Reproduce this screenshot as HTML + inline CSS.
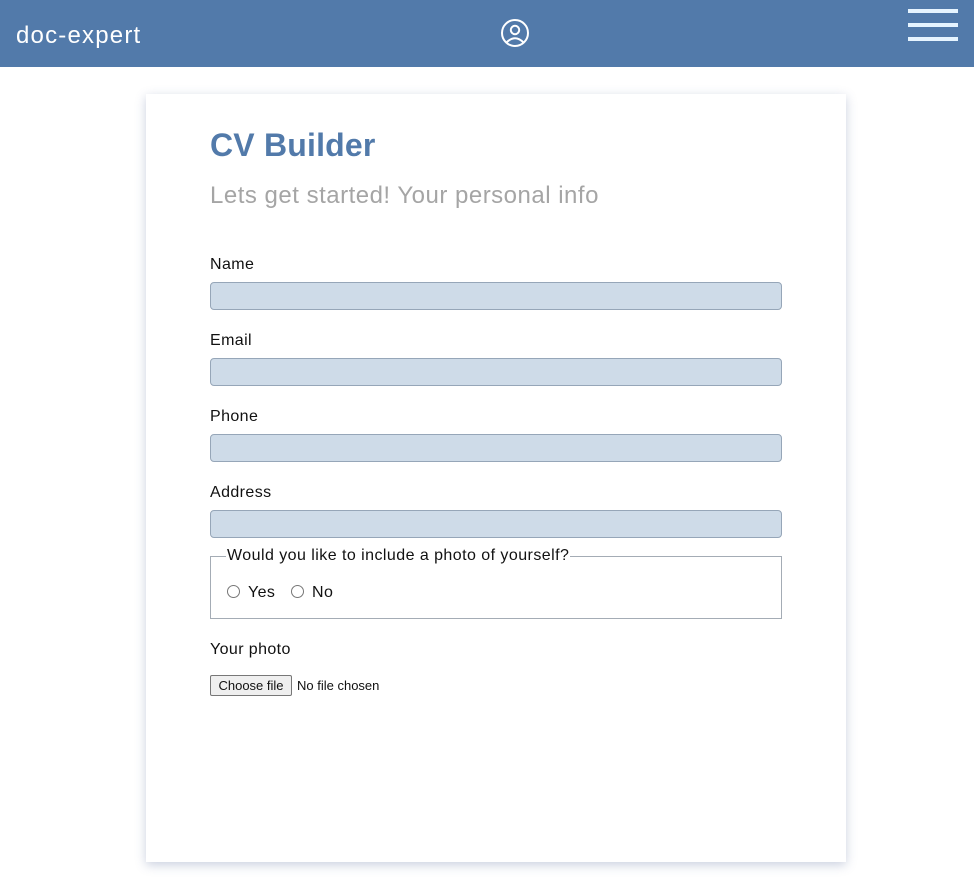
<!DOCTYPE html>
<html><head><meta charset="utf-8"><style>
*{box-sizing:border-box;margin:0;padding:0}
body{width:974px;height:882px;background:#fff;font-family:"Liberation Sans",sans-serif;position:relative;overflow:hidden}
.hdr{position:absolute;left:0;top:0;width:974px;height:67px;background:#527aaa}
.logo{position:absolute;left:16px;top:22px;color:#fff;font-size:24px;letter-spacing:1.2px}
.bar{position:absolute;left:908px;width:50px;height:4px;background:#e6f4ff}
.card{position:absolute;left:146px;top:94px;width:700px;height:768px;background:#fff;box-shadow:0 3px 10px rgba(80,100,150,0.3)}
.t{position:absolute;left:210px;top:127px;font-size:32px;font-weight:bold;color:#527aaa;letter-spacing:0.2px}
.s{position:absolute;left:210px;top:182px;font-size:24px;color:#a5a5a5;font-weight:300;letter-spacing:0.5px}
.l{position:absolute;left:210px;font-size:16px;color:#111;letter-spacing:0.4px}
.in{position:absolute;left:210px;width:572px;height:28px;background:#cedbe8;border:1px solid #96a6b8;border-radius:4px}
.fs{position:absolute;left:210px;top:556px;width:572px;height:63px;border:1px solid #a4acb5}
.lg{position:absolute;left:226px;top:547px;background:#fff;padding:0 1px;font-size:16px;color:#111;letter-spacing:0.45px}
.r{position:absolute;width:13px;height:13px;border:1px solid #777;border-radius:50%;top:585px}
.btn{position:absolute;left:210px;top:675px;width:82px;height:21px;border:1px solid #777;background:#efefef;border-radius:2px;font-size:13px;text-align:center;line-height:19px;color:#111}
</style></head><body>
<div class="hdr">
<div class="logo">doc-expert</div>
<svg style="position:absolute;left:500px;top:18px" width="30" height="30" viewBox="0 0 30 30" fill="none" stroke="#fff" stroke-width="2"><circle cx="15" cy="15" r="13"/><circle cx="15" cy="12" r="4.2"/><path d="M6.5 24.5 Q15 16 23.5 24.5"/></svg>
<div class="bar" style="top:9px"></div><div class="bar" style="top:23px"></div><div class="bar" style="top:37px"></div>
</div>
<div class="card"></div>
<div class="t">CV Builder</div>
<div class="s">Lets get started! Your personal info</div>
<div class="l" style="top:256px">Name</div><div class="in" style="top:282px"></div>
<div class="l" style="top:332px">Email</div><div class="in" style="top:358px"></div>
<div class="l" style="top:408px">Phone</div><div class="in" style="top:434px"></div>
<div class="l" style="top:484px">Address</div><div class="in" style="top:510px"></div>
<div class="fs"></div>
<div class="lg">Would you like to include a photo of yourself?</div>
<div class="r" style="left:227px"></div><div class="l" style="left:248px;top:584px">Yes</div>
<div class="r" style="left:291px"></div><div class="l" style="left:312px;top:584px">No</div>
<div class="l" style="top:641px">Your photo</div>
<div class="btn">Choose file</div>
<div style="position:absolute;left:297px;top:678px;font-size:13px;color:#111">No file chosen</div>
</body></html>
